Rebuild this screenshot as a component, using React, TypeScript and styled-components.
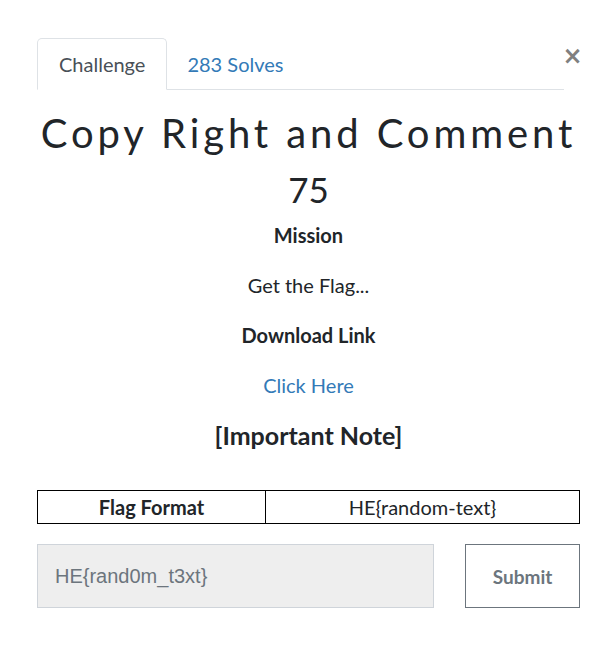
import React from "react";
import styled, { createGlobalStyle } from "styled-components";

const Global = createGlobalStyle`
  html, body { margin: 0; padding: 0; background: #fff; }
  body { font-family: Lato, "Noto Sans", sans-serif; color: #212529; }
  * { box-sizing: border-box; }
`;

const Page = styled.div`
  width: 613px;
  padding: 38px 33px 40px 37px;
`;

const Header = styled.div`
  display: flex;
  align-items: flex-start;
`;

const Nav = styled.ul`
  display: flex;
  list-style: none;
  margin: 0;
  padding: 0;
  flex: 1;
  border-bottom: 1px solid #dee2e6;
`;

const Tab = styled.li<{ $active?: boolean }>`
  height: 52px;
  padding: ${(p) => (p.$active ? "0 21px" : "0 20px 0 19px")};
  display: flex;
  align-items: center;
  font-size: 20px;
  margin-bottom: -1px;
  border: 1px solid ${(p) => (p.$active ? "#dee2e6" : "transparent")};
  border-bottom-color: ${(p) => (p.$active ? "#fff" : "transparent")};
  border-radius: 5px 5px 0 0;
  background: ${(p) => (p.$active ? "#fff" : "transparent")};
  color: ${(p) => (p.$active ? "#495057" : "#337ab7")};
`;

const Close = styled.button`
  border: none;
  background: none;
  padding: 0;
  margin: 6px 0 0 1px;
  width: 15px;
  height: 24px;
  font-family: "DejaVu Sans", sans-serif;
  font-weight: bold;
  font-size: 24px;
  line-height: 24px;
  color: #808080;
  display: flex;
  align-items: center;
  justify-content: center;
`;

const Body = styled.div`
  text-align: center;
  width: 543px;
`;

const Title = styled.h3`
  font-family: Lato, sans-serif;
  font-weight: 400;
  font-size: 40px;
  line-height: 48px;
  letter-spacing: 3.9px;
  margin: 19px 0 0;
  color: #212529;
  white-space: nowrap;
`;

const Points = styled.h4`
  font-family: Lato, sans-serif;
  font-weight: 400;
  font-size: 35px;
  line-height: 42px;
  margin: 11px 0 10px;
  color: #212529;
`;

const Para = styled.p<{ $bold?: boolean }>`
  font-size: 20px;
  line-height: 30px;
  margin: 0 0 20px;
  font-weight: ${(p) => (p.$bold ? 700 : 400)};
`;

const Link = styled.a`
  color: #337ab7;
  text-decoration: none;
`;

const Note = styled.h4`
  font-size: 25px;
  line-height: 30px;
  font-weight: 700;
  margin: 0 0 40px;
`;

const Table = styled.table`
  width: 100%;
  border-collapse: collapse;
  table-layout: fixed;
  margin-bottom: 20px;
`;

const Col = styled.col<{ $w?: number }>`
  width: ${(p) => (p.$w ? `${p.$w}px` : "auto")};
`;

const Cell = styled.td<{ $bold?: boolean }>`
  border: 1px solid #000;
  font-size: 20px;
  line-height: 32px;
  padding: 0;
  font-weight: ${(p) => (p.$bold ? 700 : 400)};
`;

const SubmitRow = styled.div`
  display: flex;
  gap: 31px;
`;

const Input = styled.input`
  width: 397px;
  height: 64px;
  background: #eeeeee;
  border: 1px solid #cfd4da;
  padding: 0 17px;
  font-family: "Liberation Sans", Arial, sans-serif;
  font-size: 20px;
  &::placeholder { color: #6c757d; }
`;

const SubmitButton = styled.button`
  width: 115px;
  height: 64px;
  background: #fff;
  border: 1px solid #6c757d;
  color: #6c757d;
  font-family: Lato, sans-serif;
  font-weight: 700;
  font-size: 19px;
`;

export default function App() {
  return (
    <>
      <Global />
      <Page>
        <Header>
          <Nav>
            <Tab $active>Challenge</Tab>
            <Tab>283 Solves</Tab>
          </Nav>
          <Close aria-label="Close">×</Close>
        </Header>
        <Body>
          <Title>Copy Right and Comment</Title>
          <Points>75</Points>
          <Para $bold>Mission</Para>
          <Para>Get the Flag...</Para>
          <Para $bold>Download Link</Para>
          <Para>
            <Link href="#">Click Here</Link>
          </Para>
          <Note>[Important Note]</Note>
          <Table>
            <colgroup>
              <Col $w={228} />
              <Col />
            </colgroup>
            <tbody>
              <tr>
                <Cell $bold>Flag Format</Cell>
                <Cell>HE{"{random-text}"}</Cell>
              </tr>
            </tbody>
          </Table>
          <SubmitRow>
            <Input placeholder="HE{rand0m_t3xt}" />
            <SubmitButton>Submit</SubmitButton>
          </SubmitRow>
        </Body>
      </Page>
    </>
  );
}
